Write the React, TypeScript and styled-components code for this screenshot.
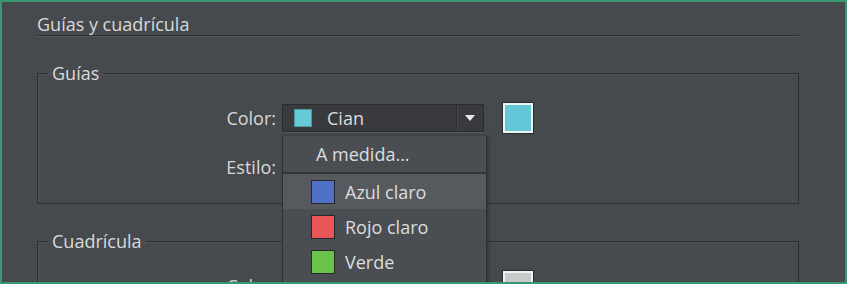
import React from "react";
import styled, { createGlobalStyle } from "styled-components";

const Global = createGlobalStyle`
  html, body { margin: 0; padding: 0; background: #46494d; }
  body { font-family: "Open Sans", "Noto Sans", sans-serif; }
`;

const Frame = styled.div`
  position: relative;
  box-sizing: border-box;
  width: 847px;
  height: 284px;
  overflow: hidden;
  background: #46494d;
  border: 2px solid #3a9670;
  padding: 0 46px 0 35px;
  color: #d6d8d9;
  font-size: 18px;
`;

const Title = styled.div`
  margin-top: 12px;
  height: 21px;
  line-height: 21px;
  border-bottom: 1px solid #2e3033;
  box-shadow: 0 1px 0 #54575b;
  color: #d8dadb;
  white-space: nowrap;
`;

const Group = styled.fieldset`
  position: relative;
  margin: 28px 0 0 0;
  padding: 21px 0 21px 0;
  border: 1px solid #2b2d30;
  box-shadow: inset 1px 1px 0 #505357;
  min-width: 0;
`;

const Legend = styled.legend`
  margin-left: 10px;
  padding: 0 4px;
  line-height: 18px;
  height: 18px;
  color: #d8dadb;
`;

const Row = styled.div`
  display: grid;
  grid-template-columns: 238px 202px 30px;
  column-gap: 6px;
  align-items: center;
  height: 30px;
  & + & {
    margin-top: 19px;
  }
`;

const Label = styled.span`
  text-align: right;
  color: #d6d8d9;
`;

const Select = styled.div`
  box-sizing: border-box;
  height: 28px;
  display: flex;
  align-items: center;
  background: #383a3d;
  border: 1px solid #2a2c2f;
  box-shadow: 0 1px 0 #55585c;
  padding-left: 11px;
`;

const SmallSwatch = styled.span<{ $c: string }>`
  width: 18px;
  height: 18px;
  background: ${(p) => p.$c};
  box-shadow: inset 0 0 0 1px rgba(0,0,0,0.25);
  flex: none;
`;

const SelectText = styled.span`
  margin-left: 15px;
  flex: 1;
  color: #dcdedf;
`;

const ArrowBox = styled.span`
  margin-left: auto;
  width: 26px;
  height: 100%;
  border-left: 1px solid #2c2e31;
  box-shadow: inset 1px 0 0 #45474b;
  display: flex;
  align-items: center;
  justify-content: center;
`;

const BigSwatch = styled.span<{ $c: string }>`
  box-sizing: border-box;
  margin-left: 13px;
  width: 30px;
  height: 30px;
  background: ${(p) => p.$c};
  border: 2px solid #eef3f3;
  box-shadow: 0 0 0 1px #2a2c2f;
`;

const Menu = styled.div`
  position: absolute;
  top: 54px;
  left: 244px;
  width: 203px;
  min-height: 190px;
  background: #4a4d51;
  border-left: 1px solid #2d2f32;
  border-right: 1px solid #2d2f32;
  box-shadow: 2px 0 3px rgba(0,0,0,0.25);
  z-index: 2;
`;

const MenuHead = styled.div`
  height: 36px;
  line-height: 36px;
  padding-left: 33px;
  color: #dcdedf;
  border-bottom: 2px solid #333538;
`;

const MenuItem = styled.div<{ $active?: boolean }>`
  height: 35px;
  display: flex;
  align-items: center;
  padding-left: 28px;
  background: ${(p) => (p.$active ? "#56595d" : "transparent")};
  color: #dcdedf;
  &:first-of-type { margin-top: 2px; }
`;

const ItemSwatch = styled.span<{ $c: string }>`
  box-sizing: border-box;
  width: 24px;
  height: 24px;
  background: ${(p) => p.$c};
  border: 1px solid #26282b;
  margin-right: 10px;
`;

const Arrow = () => (
  <svg width="10" height="6" viewBox="0 0 10 6">
    <path d="M0 0 H10 L5 6 Z" fill="#e6e8e9" />
  </svg>
);

const menuItems = [
  { name: "Azul claro", color: "#5070c6", active: true },
  { name: "Rojo claro", color: "#ea5558" },
  { name: "Verde", color: "#6ac24a" },
];

export default function App() {
  return (
    <>
      <Global />
      <Frame>
        <Title>Guías y cuadrícula</Title>
        <Group>
          <Legend>Guías</Legend>
          <Row>
            <Label>Color:</Label>
            <Select>
              <SmallSwatch $c="#66cbd9" />
              <SelectText>Cian</SelectText>
              <ArrowBox>
                <Arrow />
              </ArrowBox>
            </Select>
            <BigSwatch $c="#62c8d8" />
          </Row>
          <Row>
            <Label>Estilo:</Label>
            <Select>
              <ArrowBox>
                <Arrow />
              </ArrowBox>
            </Select>
          </Row>
          <Menu>
            <MenuHead>A medida...</MenuHead>
            {menuItems.map((m) => (
              <MenuItem key={m.name} $active={m.active}>
                <ItemSwatch $c={m.color} />
                {m.name}
              </MenuItem>
            ))}
          </Menu>
        </Group>
        <Group>
          <Legend>Cuadrícula</Legend>
          <Row>
            <Label>Color:</Label>
            <Select>
              <SmallSwatch $c="#c8c9c9" />
              <ArrowBox>
                <Arrow />
              </ArrowBox>
            </Select>
            <BigSwatch $c="#c8c9c9" />
          </Row>
        </Group>
      </Frame>
    </>
  );
}
